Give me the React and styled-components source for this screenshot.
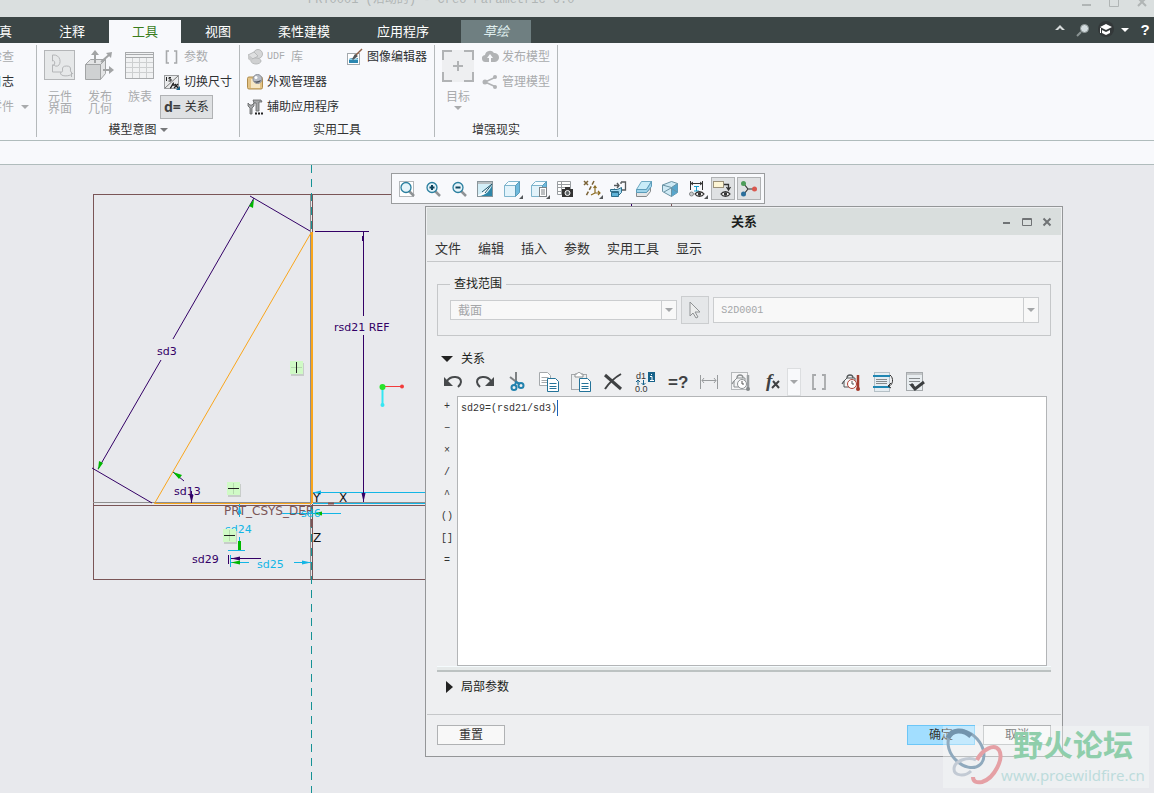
import React, { useState } from 'react';
import styled, { createGlobalStyle, css } from 'styled-components';

const TITLE = 'PRT0001 (活动的) - Creo Parametric 6.0';

const OPERATORS = ['+', '−', '×', '/', '^', '()', '[]', '='];

const MENUS = ['文件', '编辑', '插入', '参数', '实用工具', '显示'];

const Svg = ({ size = 16, box = 16, children }) => (
    <svg width={size} height={size} viewBox={`0 0 ${box} ${box}`} fill="none" aria-hidden="true">
        {children}
    </svg>
);

/* ---------- ribbon icons ---------- */

const PuzzleIcon = () => (
    <Svg size={32} box={32}>
        <rect x="0.5" y="0.5" width="30" height="29" fill="#e6e8e9" stroke="#b4b6b8" />
        <path d="M8.5 5v6c3-2 3 6 0 4v7h9c3 0-2-6 5-6s2 6 5 6v5M8.5 5c9-1 9 10 5 11-3 1-3-2-5-1M17 22c-3 5 10 5 12 1" stroke="#b4b6b8" />
    </Svg>
);

const PublishIcon = () => (
    <Svg size={32} box={32}>
        <path d="M1.5 14.500h15v15h-15z" fill="#cfd1d2" stroke="#a2a4a5" />
        <path d="M1.500 14.500l5-5h15l-5 5zM16.500 14.500l5-5v14l-5 6z" fill="#e3e4e5" stroke="#a2a4a5" />
        <path d="M11 13V4M17 12l8-7M19 20h8" stroke="#a2a4a5" strokeWidth="2" />
        <path d="M11 0l4 5H7zM28 2l-1 6-5-5zM30 20l-5 4v-8z" fill="#a2a4a5" />
    </Svg>
);

const TableIcon = () => (
    <Svg size={32} box={32}>
        <rect x="1.5" y="2.5" width="28" height="26" fill="#f1f2f3" stroke="#a9abad" />
        <path d="M1 4.5h29M1 7.500h29" stroke="#a9abad" />
        <path d="M2 12.500h27M2 17.500h27M2 22.500h27M8.500 8v20M15.500 8v20M22.500 8v20" stroke="#cdcfd0" />
    </Svg>
);

const TargetIcon = () => (
    <Svg size={32} box={32}>
        <rect width="32" height="32" fill="#eeeff1" />
        <path d="M1 10V1h9M22 1h9v9M31 22v9h-9M10 31H1v-9" stroke="#b1b3b5" strokeWidth="2" />
        <path d="M16 11v10M11 16h10" stroke="#b1b3b5" strokeWidth="2" />
    </Svg>
);

const BracketIcon = () => (
    <Svg>
        <path d="M5 2H2.500v12H5M10 2h2.500v12H10" stroke="#a7a9ab" strokeWidth="1.600" />
    </Svg>
);

const SwitchDimIcon = () => (
    <Svg>
        <rect x="0.500" y="1.500" width="14" height="13" fill="#e9eaeb" stroke="#9b9d9f" />
        <path d="M1 14L14 2" stroke="#777" />
        <path d="M2.500 3v4M7 3.500H5v1.500h2v2H4.500" stroke="#222" />
        <path d="M6 14c2 0 2-5 4-5M8 11h3M10 14l4-4M11 10l3 4" stroke="#222" strokeWidth="1.300" />
        <path d="M16 12v4h-4z" fill="#17628a" />
    </Svg>
);

const ShapesIcon = () => (
    <Svg>
        <circle cx="11" cy="5" r="4.500" fill="#d5d6d7" stroke="#b8babb" />
        <path d="M1 6l6-3 4 4-5 3z" fill="#dfe0e1" stroke="#b8babb" />
        <ellipse cx="9" cy="12" rx="5" ry="3" fill="#cfd0d1" stroke="#b8babb" />
        <path d="M1 6v4l4 3V9z" fill="#c9cacb" />
    </Svg>
);

const AppearanceIcon = () => (
    <Svg>
        <rect x="0.500" y="3" width="15" height="12" rx="1.500" fill="#e3c386" stroke="#b08d4c" />
        <path d="M4 5h9v9H4z" fill="#f6e7c4" />
        <circle cx="10.500" cy="5" r="4.500" fill="#b6bbc4" stroke="#8c9099" />
        <path d="M7 7c2 3 6 2 7-1-2 1-5 2-7 1z" fill="#4b4f57" />
        <circle cx="9" cy="3.500" r="1.500" fill="#fff" />
    </Svg>
);

const WrenchIcon = () => (
    <Svg>
        <path d="M1 4v3l2 2v6h2V9l2-2V4L5 6H3z" fill="#a5a7a9" stroke="#606263" strokeWidth="0.800" />
        <path d="M6 1h8l1 2h-3v9H9V4H7z" fill="#a5a7a9" stroke="#606263" strokeWidth="0.800" />
        <path d="M8 14.500h2M11 14.500h2M14 14.500h2" stroke="#222" strokeWidth="2" />
    </Svg>
);

const ImageEditIcon = () => (
    <Svg>
        <rect x="0.500" y="4.500" width="12" height="11" fill="#fff" stroke="#a3a9ad" />
        <path d="M2 10c3-2 6 1 9-1v5H2z" fill="#2b86b0" />
        <path d="M2 10h9v1H2z" fill="#8fd0ea" />
        <path d="M15 0L8 7" stroke="#8d5f45" strokeWidth="1.500" />
        <path d="M8 5l3 2-5 4-1-1z" fill="#55585a" />
    </Svg>
);

const CloudIcon = () => (
    <Svg>
        <path d="M4 13a3.500 3.500 0 0 1-1-7 5 5 0 0 1 9-2 4.500 4.500 0 0 1 1 9z" fill="#b1b3b5" />
        <path d="M8 5l3 4H9v4H7V9H5z" fill="#f8f9fc" />
    </Svg>
);

const ShareIcon = () => (
    <Svg>
        <path d="M14 3L3 8l11 5" stroke="#b1b3b5" strokeWidth="1.500" />
        <circle cx="3" cy="8" r="2.500" fill="#b1b3b5" />
        <circle cx="13" cy="3" r="2" fill="#b1b3b5" />
        <circle cx="13" cy="13" r="2" fill="#b1b3b5" />
    </Svg>
);

const RelationGlyph = styled.span`
    font: bold 14px/16px 'Noto Sans', sans-serif;
    color: #3d3f41;
`;

/* ---------- view toolbar icons ---------- */

const Lens = ({ children }) => (
    <>
        <path d="M10 10l5 5" stroke="#8f9396" strokeWidth="2.500" />
        <circle cx="7" cy="6.500" r="5" fill="#e6f4fa" stroke="#2a7f9f" strokeWidth="1.300" />
        {children}
    </>
);

const Cube = () => (
    <>
        <path d="M0.500 4.500h11v11h-11z" fill="#e2f3fb" stroke="#7fb5cd" />
        <path d="M0.500 4.500l4-4h11l-4 4z" fill="#f5fcff" stroke="#7fb5cd" />
        <path d="M11.500 4.500l4-4v11l-4 4z" fill="#6fbadd" stroke="#5b9cba" />
    </>
);

const Eye = () => (
    <>
        <path d="M6 13c2-3 7-3 9 0-2 3-7 3-9 0z" fill="#fff" stroke="#333" strokeWidth="1.300" />
        <circle cx="10.500" cy="13" r="1.700" fill="#333" />
    </>
);

const VIEW_TOOLS = [
    { label: '重新调整', art: <><rect x="0.500" y="0.500" width="14" height="15" fill="#fff" stroke="#b3b7ba" /><Lens /></> },
    { label: '放大', art: <Lens><path d="M4.500 6.500h5M7 4v5" stroke="#10455e" strokeWidth="2" /></Lens> },
    { label: '缩小', art: <Lens><path d="M4.500 6.500h5" stroke="#10455e" strokeWidth="2" /></Lens> },
    {
        label: '重画',
        art: <>
            <rect x="0.500" y="0.500" width="15" height="15" fill="#d3eef7" stroke="#89959b" />
            <path d="M1 2h14" stroke="#b9bfc2" strokeWidth="2" />
            <path d="M2 15C9 14 13 10 15 4v11z" fill="#2e86a8" />
            <path d="M1 14c4-1 5-3 5-3l9-7-6 8c-3 2-5 3-8 3z" fill="#fff" />
            <path d="M5 11l10-8-7 9" stroke="#20556b" />
        </>,
    },
    { label: '显示样式', drop: true, art: <Cube /> },
    { label: '已保存方向', drop: true, art: <><Cube /><rect x="8.500" y="6.500" width="7" height="9" fill="#fff" stroke="#7d8286" /><path d="M10 9h4M10 11h4M10 13h4" stroke="#7d8286" /></> },
    {
        label: '视图管理器',
        art: <>
            <path d="M1 1h13v13H1z" fill="#fff" />
            <path d="M0.500 0.500h13v13h-13zM0.500 3.500h13M0.500 6.500h13M0.500 10.500h13M4.500 0v14" stroke="#999da0" />
            <rect x="5" y="8" width="11" height="8" fill="#333" />
            <rect x="8" y="6" width="5" height="3" fill="#333" />
            <circle cx="10.500" cy="12" r="2.500" fill="#5f6466" stroke="#fff" />
        </>,
    },
    {
        label: '基准显示',
        drop: true,
        art: <>
            <path d="M0 0l4 4M4 0L0 4" stroke="#7a6236" strokeWidth="1.500" />
            <path d="M10 0L2 15" stroke="#7a6236" strokeWidth="1.500" strokeDasharray="4 2" />
            <path d="M11 5v7h5M11 12l-4 2M9.500 7L11 5l1.500 2M14 10l2 2-2 2" stroke="#8b6b20" strokeWidth="1.200" />
        </>,
    },
    {
        label: '旋转中心',
        art: <>
            <path d="M1.500 11.500h7v4h-7zM1.500 11.500l3-4" fill="#5fb3d8" stroke="#2d6f8c" />
            <path d="M0.500 8.500h7l4-2v5l-3 3v-4h-8z" fill="#a6daf0" stroke="#2d6f8c" />
            <path d="M4 4.500h5M7 2l2 2.500L7 7M11 1h4.500v8H12M11 1v2" stroke="#55595b" strokeWidth="1.300" />
        </>,
    },
    {
        label: '截面',
        art: <>
            <path d="M0.500 11.500h10l4-5v4l-4 5h-10z" fill="#e3e5e6" stroke="#85898b" />
            <path d="M0.500 8.500l5-8h10l-5 8z" fill="#c8ecf8" stroke="#6ea9c2" />
            <path d="M10.500 8.500l5-8v5l-5 6h-10v-3z" fill="#9fd4ea" stroke="#5b9cba" />
        </>,
    },
    {
        label: '透视图',
        art: <>
            <path d="M0.500 4l9-3.500 6 2v9l-6 4-9-5z" fill="#cfeaf5" stroke="#6a93a4" />
            <path d="M9.500 6.500l6-4v9l-6 4z" fill="#58a6cc" />
            <path d="M0.500 4l9 2.500 6-4M9.500 6.500v9M2 11l7-4 6 4" stroke="#6a93a4" />
        </>,
    },
    {
        label: '注释显示',
        drop: true,
        art: <>
            <path d="M1.500 0v9M13.500 0v9M2 2.500h11M4 1L2 2.500 4 4M11 1l2 1.500L11 4" stroke="#333" />
            <path d="M5 5.500h5M7.500 5v5M5 10h5" stroke="#179ccb" />
            <circle cx="2.500" cy="13" r="2" fill="#c9cccd" stroke="#85898b" />
            <Eye />
        </>,
    },
    {
        label: '注释过滤',
        on: true,
        art: <>
            <rect x="-1.500" y="0.500" width="10" height="6" fill="#fdf5d4" stroke="#9b917a" />
            <path d="M9 3.500h4.500v5M11.500 6l2 3 2-3" stroke="#333" strokeWidth="1.300" />
            <Eye />
        </>,
    },
    {
        label: '坐标显示',
        on: true,
        art: <>
            <path d="M3 3l4 5h6M7 8l-4 5" stroke="#333" strokeWidth="1.200" />
            <circle cx="2.500" cy="2.500" r="2.500" fill="#4d9d5a" />
            <circle cx="2.500" cy="13" r="2.500" fill="#2b6f9c" />
            <circle cx="13.500" cy="8" r="2.500" fill="#d9584f" />
        </>,
    },
];

/* ---------- dialog toolbar icons ---------- */

const Page = ({ x, y, color = '#a5a9ac' }) => (
    <>
        <path d={`M${x} ${y}h8l3 3v10h-11z`} fill="#fff" stroke={color} />
        <path d={`M${x + 2} ${y + 5}h7M${x + 2} ${y + 8}h7M${x + 2} ${y + 10}h7`} stroke={color} />
    </>
);

const Kettle = ({ hot }) => (
    <>
        <path d="M3 15V9l3-3h8v9z" fill="#f3f4f5" stroke={hot ? '#55595b' : '#8d9193'} />
        <path d="M6 6c0-4 6-4 6 0M3 9l-2 3" stroke={hot ? '#55595b' : '#8d9193'} strokeWidth="1.300" />
        <circle cx="11" cy="12" r="4.500" fill="#fff" stroke={hot ? '#b34437' : '#8d9193'} />
        <path d="M11 9v3h2" stroke="#555" />
        <path d="M17 3v13" stroke={hot ? '#a33a2c' : '#9b9fa1'} strokeWidth="2.500" />
        <circle cx="17" cy="17" r="2" fill={hot ? '#a33a2c' : '#85898b'} />
    </>
);

const EDIT_TOOLS = [
    { label: '撤消', art: <><path d="M4 9c4-6 14-5 14 1 0 2-1 3-3 5" stroke="#474a4c" strokeWidth="2" /><path d="M1 5v9h9z" fill="#474a4c" /></> },
    { label: '重做', art: <><path d="M16 9C12 3 2 4 2 10c0 2 1 3 3 5" stroke="#474a4c" strokeWidth="2" /><path d="M19 5v9h-9z" fill="#474a4c" /></> },
    {
        label: '剪切',
        art: <>
            <path d="M9 0v11M3 5l9 7" stroke="#7d8183" strokeWidth="2" />
            <circle cx="7" cy="15.500" r="2.500" stroke="#2282ae" strokeWidth="2" />
            <circle cx="14" cy="13.500" r="2.500" stroke="#2282ae" strokeWidth="2" />
            <path d="M8 13l1-3 4 2" stroke="#2282ae" strokeWidth="2" />
        </>,
    },
    { label: '复制', art: <><Page x={0.5} y={0.5} /><Page x={8.5} y={6.5} color="#247399" /></> },
    { label: '粘贴', art: <><rect x="0.500" y="2.500" width="15" height="15" fill="#eceeef" stroke="#a5a9ac" /><path d="M4 5V2h2c0-2 4-2 4 0h2v3z" fill="#fff" stroke="#8d9193" /><Page x={8.5} y={6.5} color="#247399" /></> },
    { label: '删除', art: <><path d="M2 3l16 14" stroke="#3f4143" strokeWidth="3" /><path d="M18 2C11 6 6 11 2 17" stroke="#3f4143" strokeWidth="2" /></> },
    {
        label: '切换尺寸',
        art: <>
            <text x="1" y="7" fontSize="9" fill="#333" fontFamily="Liberation Sans">d1</text>
            <text x="0" y="20" fontSize="9" fill="#333" fontFamily="Liberation Sans">0.0</text>
            <path d="M3 13V8M1 10l2-2 2 2M8.500 8v5M6.500 11l2 2 2-2" stroke="#17628a" />
            <rect x="13" y="0" width="7" height="10" fill="#17628a" />
            <path d="M15 4.500h2v4M15 8.500h4M16 2.500h1" stroke="#fff" />
        </>,
    },
    { label: '求值', art: <text x="1" y="16" fontSize="17" fontWeight="bold" fill="#3f4143" fontFamily="Liberation Sans">=?</text> },
    { label: '显示尺寸', art: <path d="M1.500 3v14M18.500 3v14M3 8.500h14M5 6L3 8.500 5 11M15 6l2 2.500-2 2.500" stroke="#999c9e" /> },
    { label: '单位', art: <><rect x="0.500" y="0.500" width="16" height="17" fill="#f5f5f6" stroke="#b5b8ba" /><Kettle /></> },
    {
        label: '插入函数',
        fx: true,
        art: <>
            <text x="4" y="15" fontSize="19" fontWeight="bold" fontStyle="italic" fill="#3f4143" fontFamily="Liberation Serif">f</text>
            <path d="M11 9l6 7M17 9l-7 7" stroke="#3f4143" strokeWidth="2" />
        </>,
    },
    { label: '插入参数', art: <path d="M7 3H4v14h3M13 3h3v14h-3" stroke="#a7a9ab" strokeWidth="1.800" /> },
    { label: '单位敏感', art: <Kettle hot /> },
    {
        label: '排序',
        art: <>
            <rect x="1.500" y="0.500" width="15" height="19" fill="#e5edf2" stroke="#b5c0c6" />
            <path d="M0 4h17M0 15h17" stroke="#1f86b2" strokeWidth="2" />
            <path d="M3 7.500h11M3 9.500h11M3 11.500h11" stroke="#85898b" />
            <path d="M17 3c4 3 3 10-1 11M18 11l-3 3 3 2" stroke="#333" />
        </>,
    },
    {
        label: '验证',
        art: <>
            <rect x="1.500" y="0.500" width="16" height="18" fill="#e8edf0" stroke="#a5a9ac" />
            <path d="M2 2h15" stroke="#c5c8ca" strokeWidth="2" />
            <path d="M4 6.500h11M4 9.500h11M4 12.500h5" stroke="#85898b" />
            <path d="M6 12l4 5 9-7" stroke="#3b3e40" strokeWidth="3" />
        </>,
    },
];

/* ---------- small pieces ---------- */

const Triangle = styled.span`
    display: inline-block;
    flex: none;
    border: ${({ $size = 4 }) => $size}px solid transparent;
    ${({ $dir = 'down', $size = 4, $color = '#77797b' }) =>
        $dir === 'down'
            ? css`
                border-bottom: 0;
                border-top-color: ${$color};
            `
            : css`
                border-right: 0;
                border-left: ${$size + 1}px solid ${$color};
            `}
`;

const RibbonButton = ({ icon, label, disabled, active, mono, inset }) => (
    <SmallButton type="button" disabled={disabled} $active={active} $inset={inset}>
        {icon}
        {mono && <Mono>{mono}</Mono>}
        <span>{label}</span>
    </SmallButton>
);

const Combo = ({ label, value, tall, mono }) => (
    <ComboBox $grow={tall ? 326 : 227} $tall={tall}>
        <ComboSelect aria-label={label} disabled $mono={mono}>
            <option>{value}</option>
        </ComboSelect>
        <ComboArrow><Triangle $color="#a4a6a8" /></ComboArrow>
    </ComboBox>
);

/* ---------- sketch drawn on the canvas ---------- */

const Constraint = ({ x, y, vertical }) => (
    <g>
        <rect x={x + 1} y={y + 2} width="13" height="13" fill="#c8cdca" />
        <rect x={x} y={y} width="13" height="13" fill="#d0fac6" />
        <path d={`M${x + 1} ${y + 6.5}h11M${x + 6.5} ${y + 1}v11`} stroke="#b5d8ae" />
        <path d={vertical ? `M${x + 6.5} ${y + 1}v11` : `M${x + 1} ${y + 6.5}h11`} stroke="#222" />
    </g>
);

const Sketch = () => (
    <SketchSvg aria-label="草绘">
        <g transform="translate(0 -165)" fill="none">
            <rect x="93.500" y="194.500" width="578" height="385" stroke="#7a5557" />
            <path d="M93 505.500h578" stroke="#7a5557" />
            <path d="M93 502.500h578M310.500 195v384" stroke="#8e8e8e" />
            <path d="M312.500 195v37M312.500 504v75" stroke="#7a5557" />
            <path d="M311.500 165v67M311.500 506v287" stroke="#159295" strokeDasharray="8 6" />
            <path d="M312 503.500H154.500L311.500 232" stroke="#f9a51b" />
            <path d="M312 232v271" stroke="#f9a51b" strokeWidth="2" />
            <path d="M313 503.500h400M313 492.500h400" stroke="#12b5e5" />
            <path d="M313 492.500l8-2v4z" fill="#12b5e5" />

            <g stroke="#330066">
                <path d="M250 196l60 35M92 468l60 35M254 198L173 339M161 360L98 469" />
                <path d="M315 231.500h54M363.500 232v84M363.500 335v167M631.500 203v4" />
                <path d="M173 472l11 9M191.500 491v12M228.500 555v9M231 558.500h30" />
            </g>
            <path d="M362 236h2v5h-2zM363.500 502l-2-9h4zM191.500 503l-2-8h4zM231 558.500l9-2v4z" fill="#330066" />
            <path d="M254 199l-1 9-4-2zM98 470l1-9 4 2zM173 472l9 3-3 4z" fill="#00b800" />

            <g stroke="#12b5e5">
                <path d="M239.500 504v13M239.500 537v14M228 550.500h17M230.500 555v12M231 562.500h18M294 562.500h17M281 513.500h60" />
            </g>
            <path d="M239.500 505l2 9h-4zM311 562.500l-9-2v4z" fill="#12b5e5" />
            <path d="M238 541h3v9h-3zM231 562.500l9-2v4zM313 513.500l9-2v4z" fill="#00b800" />
            <path d="M311.500 519v8M328 503.500h6" stroke="#7a5557" strokeWidth="2" />

            <DimText x="157" y="355">sd3</DimText>
            <DimText x="334" y="331">rsd21 REF</DimText>
            <DimText x="174" y="495">sd13</DimText>
            <DimText x="192" y="563">sd29</DimText>
            <DimText x="224" y="515" $color="#7a5557" $size={12}>PRT_CSYS_DEF</DimText>
            <DimText x="225" y="533" $color="#12b5e5">sd24</DimText>
            <DimText x="257" y="568" $color="#12b5e5">sd25</DimText>
            <DimText x="301" y="517" $color="#12b5e5">sd6</DimText>
            <DimText x="313" y="502" $color="#111" $size={12}>Y</DimText>
            <DimText x="339" y="502" $color="#111" $size={12}>X</DimText>
            <DimText x="313" y="542" $color="#111" $size={12}>Z</DimText>

            <Constraint x={290} y={361} vertical />
            <Constraint x={227} y={482} />
            <Constraint x={223} y={529} />

            <path d="M382.500 387v17" stroke="#35e6f2" strokeWidth="2" />
            <path d="M382 386.500h20" stroke="#f23b3b" />
            <circle cx="402" cy="386.500" r="2" fill="#f23b3b" />
            <circle cx="382.500" cy="405" r="2" fill="#35e6f2" />
            <circle cx="382.500" cy="387" r="3" fill="#27e32b" />
        </g>
    </SketchSvg>
);

const RelationsDialog = () => {
    const [relations, setRelations] = useState('sd29=(rsd21/sd3)');

    return (
        <Dialog role="dialog" aria-label="关系">
            <DialogTitle>
                <h1>关系</h1>
                <WindowButtons>
                    <IconButton type="button" aria-label="最小化">
                        <Svg size={12} box={12}><path d="M2 7h7" stroke="#707375" strokeWidth="2" /></Svg>
                    </IconButton>
                    <IconButton type="button" aria-label="最大化">
                        <Svg size={12} box={12}><path d="M1.500 2.500h9v7h-9zM1 3.500h10" stroke="#707375" /></Svg>
                    </IconButton>
                    <IconButton type="button" aria-label="关闭">
                        <Svg size={12} box={12}><path d="M2.500 2.500l7 7M9.500 2.500l-7 7" stroke="#707375" strokeWidth="2" /></Svg>
                    </IconButton>
                </WindowButtons>
            </DialogTitle>

            <MenuBar>
                {MENUS.map((menu) => <MenuButton key={menu} type="button">{menu}</MenuButton>)}
            </MenuBar>

            <DialogBody>
                <Scope>
                    <legend>查找范围</legend>
                    <ScopeRow>
                        <Combo label="对象类型" value="截面" />
                        <PickButton type="button" aria-label="选择" disabled>
                            <Svg size={20} box={20}><path d="M5 2v14l3-3 3 5 2-1-3-5h5z" fill="#eceded" stroke="#8f9294" /></Svg>
                        </PickButton>
                        <Combo label="对象名称" value="S2D0001" tall mono />
                    </ScopeRow>
                </Scope>

                <SectionToggle type="button">
                    <Triangle $size={6} $color="#222" />
                    关系
                </SectionToggle>

                <EditBar>
                    {EDIT_TOOLS.map(({ label, art, fx }) => (
                        <React.Fragment key={label}>
                            <EditButton type="button" aria-label={label} $narrow={fx}>
                                <Svg size={20} box={20}>{art}</Svg>
                            </EditButton>
                            {fx && <FxDrop type="button" aria-label="函数列表"><Triangle $color="#a4a6a8" /></FxDrop>}
                        </React.Fragment>
                    ))}
                </EditBar>

                <Editor>
                    <Operators>
                        {OPERATORS.map((op) => <button key={op} type="button">{op}</button>)}
                    </Operators>
                    <TextHolder>
                        <RelationText
                            aria-label="关系文本"
                            spellCheck={false}
                            value={relations}
                            onChange={(e) => setRelations(e.target.value)}
                        />
                        <Caret style={{ left: 4 + relations.length * 6 }} />
                    </TextHolder>
                </Editor>

                <Splitter />

                <SectionToggle type="button" $closed>
                    <Triangle $size={6} $dir="right" $color="#222" />
                    局部参数
                </SectionToggle>
            </DialogBody>

            <DialogFooter>
                <DialogButton type="button">重置</DialogButton>
                <Spacer />
                <DialogButton type="button" $primary>确定</DialogButton>
                <DialogButton type="button">取消</DialogButton>
            </DialogFooter>
        </Dialog>
    );
};

const App = () => {
    return (
        <Window>
            <GlobalStyle />
            <TitleBar>
                <p>{TITLE}</p>
                <Svg size={12} box={12}><path d="M2 9h9" stroke="#b0b5b5" strokeWidth="2" /></Svg>
                <Svg size={12} box={12}><path d="M1.500 2.500h9v8h-9z" stroke="#b0b5b5" /></Svg>
                <Svg size={12} box={12}><path d="M2 2l8 8M10 2l-8 8" stroke="#b0b5b5" strokeWidth="2" /></Svg>
            </TitleBar>

            <TabBar>
                <Tabs>
                    <Tab type="button">仿真</Tab>
                    <Tab type="button">注释</Tab>
                    <Tab type="button" $active>工具</Tab>
                    <Tab type="button">视图</Tab>
                    <Tab type="button">柔性建模</Tab>
                    <Tab type="button">应用程序</Tab>
                    <Tab type="button" $sketch>草绘</Tab>
                </Tabs>
                <TabTools>
                    <IconButton type="button" aria-label="最小化功能区">
                        <Svg><path d="M3 8l5-5 5 5h-3L8 6 6 8z" fill="#d7dbdb" /></Svg>
                    </IconButton>
                    <IconButton type="button" aria-label="搜索">
                        <Svg><path d="M6 10l-4 4" stroke="#8a9393" strokeWidth="2" /><circle cx="9.500" cy="6.500" r="4" fill="#d3dcdf" stroke="#8a9393" /></Svg>
                    </IconButton>
                    <IconButton type="button" aria-label="学习">
                        <Svg><circle cx="8" cy="7" r="8" fill="#333839" /><path d="M8 2l6 3-6 3-6-3zM4 8l4 2 4-2v3l-4 2-4-2zM2 6v5h1V6z" fill="#fff" /></Svg>
                    </IconButton>
                    <IconButton type="button" aria-label="更多"><Triangle $color="#fff" /></IconButton>
                    <HelpButton type="button">?</HelpButton>
                </TabTools>
            </TabBar>

            <Ribbon>
                <Group $edge>
                    <Column $end>
                        <RibbonButton label="检查" disabled inset />
                        <RibbonButton label="日志" inset />
                        <SmallButton type="button" disabled $wide>零件<Triangle $color="#a9abad" /></SmallButton>
                    </Column>
                </Group>
                <Group>
                    <GroupBody>
                        <BigButton type="button" disabled><PuzzleIcon />元件<br />界面</BigButton>
                        <BigButton type="button" disabled><PublishIcon />发布<br />几何</BigButton>
                        <BigButton type="button" disabled><TableIcon />族表</BigButton>
                        <Column>
                            <RibbonButton icon={<BracketIcon />} label="参数" disabled />
                            <RibbonButton icon={<SwitchDimIcon />} label="切换尺寸" />
                            <RibbonButton icon={<RelationGlyph>d=</RelationGlyph>} label="关系" active />
                        </Column>
                    </GroupBody>
                    <GroupName>模型意图 <Triangle /></GroupName>
                </Group>
                <Group>
                    <GroupBody>
                        <Column>
                            <RibbonButton icon={<ShapesIcon />} mono="UDF" label="库" disabled />
                            <RibbonButton icon={<AppearanceIcon />} label="外观管理器" />
                            <RibbonButton icon={<WrenchIcon />} label="辅助应用程序" />
                        </Column>
                        <Column>
                            <RibbonButton icon={<ImageEditIcon />} label="图像编辑器" />
                        </Column>
                    </GroupBody>
                    <GroupName>实用工具</GroupName>
                </Group>
                <Group>
                    <GroupBody>
                        <BigButton type="button" disabled><TargetIcon />目标<Triangle $color="#a9abad" /></BigButton>
                        <Column>
                            <RibbonButton icon={<CloudIcon />} label="发布模型" disabled />
                            <RibbonButton icon={<ShareIcon />} label="管理模型" disabled />
                        </Column>
                    </GroupBody>
                    <GroupName>增强现实</GroupName>
                </Group>
            </Ribbon>
            <Strip />

            <Canvas>
                <Sketch />
                <ViewBar>
                    {VIEW_TOOLS.map(({ label, art, drop, on }) => (
                        <ViewButton key={label} type="button" aria-label={label} $drop={drop} $on={on}>
                            <Svg>{art}</Svg>
                        </ViewButton>
                    ))}
                </ViewBar>
                <RelationsDialog />
                <Watermark>
                    <svg width="58" height="60" viewBox="0 0 58 60" fill="none" aria-hidden="true">
                        <ellipse cx="23" cy="23" rx="21" ry="15" transform="rotate(48 23 23)" stroke="#8fa9bd" strokeWidth="3" />
                        <path d="M5 12C9 3 20 3 28 10" stroke="#7394ad" strokeWidth="5" />
                        <path d="M33 34c-8-4-22 1-22 9 0 7 11 8 17 2" stroke="#c2cad4" strokeWidth="3" />
                        <path d="M34 34c5-10 17-17 22-10 5 8-4 28-17 32-5 1-9 0-9-5" stroke="#e5a0a5" strokeWidth="4" />
                    </svg>
                    <div>
                        <strong>野火论坛</strong>
                        <span>www.proewildfire.cn</span>
                    </div>
                </Watermark>
            </Canvas>
        </Window>
    );
};

// Styled Components
const GlobalStyle = createGlobalStyle`
    * {
        box-sizing: border-box;
    }
    body {
        margin: 0;
        font: 12px/16px 'Liberation Sans', 'Noto Sans CJK SC', sans-serif;
        color: #333;
    }
    button, select, textarea {
        font: inherit;
        color: inherit;
        margin: 0;
        padding: 0;
        border: 0;
        background: none;
    }
    svg {
        display: block;
        flex: none;
        overflow: visible;
    }
`;

const Window = styled.div`
    display: flex;
    flex-direction: column;
    min-height: 100vh;
    overflow: hidden;
    background: #f8f9fc;
`;

const Mono = styled.span`
    margin-right: 2px;
    font-family: 'Liberation Mono', monospace;
    font-size: 10px;
`;

const Spacer = styled.span`
    flex: 1;
`;

const TitleBar = styled.header`
    display: flex;
    gap: 16px;
    height: 17px;
    padding: 0 6px 0 308px;
    overflow: hidden;
    background: #dadfdf;
    p {
        flex: 1;
        margin: -8px 0 0;
        font: 12px/16px 'Liberation Mono', 'Noto Sans CJK SC', monospace;
        color: #b0b5b5;
        white-space: nowrap;
    }
    svg {
        margin-top: -4px;
    }
`;

const TabBar = styled.nav`
    display: flex;
    justify-content: space-between;
    height: 26px;
    padding-top: 3px;
    background: #3c4646;
`;

const Tabs = styled.div`
    display: flex;
    gap: 1px;
    margin-left: -37px;
`;

const Tab = styled.button`
    padding: 0 23px;
    font-size: 13px;
    color: #fff;
    white-space: nowrap;
    ${({ $active }) => $active && css`
        background: #f8f9fc;
        color: #3a7d1c;
    `}
    ${({ $sketch }) => $sketch && css`
        margin-left: 8px;
        padding: 0 22px;
        background: #6f7f81;
        color: #dfeeee;
        font-style: italic;
    `}
`;

const TabTools = styled.div`
    display: flex;
    align-items: center;
    gap: 7px;
    padding: 0 4px 4px 0;
`;

const IconButton = styled.button`
    display: grid;
    place-items: center;
`;

const HelpButton = styled.button`
    width: 10px;
    margin-left: 4px;
    font-size: 15px;
    font-weight: bold;
    color: #fff;
`;

const Ribbon = styled.section`
    display: flex;
    height: 98px;
    padding: 2px 0 3px;
    border-bottom: 1px solid #b0bcbc;
`;

const Group = styled.div`
    display: flex;
    flex-direction: column;
    justify-content: space-between;
    flex: none;
    padding: 0 7px;
    border-right: 1px solid #b5b9bb;
    ${({ $edge }) => $edge && css`
        width: 37px;
        align-items: flex-end;
    `}
`;

const GroupBody = styled.div`
    display: flex;
    gap: 8px;
`;

const GroupName = styled.div`
    display: flex;
    align-items: center;
    justify-content: center;
    gap: 3px;
    line-height: 14px;
`;

const Column = styled.div`
    display: flex;
    flex-direction: column;
    align-items: ${({ $end }) => ($end ? 'flex-end' : 'flex-start')};
    gap: 1px;
`;

const SmallButton = styled.button`
    display: flex;
    align-items: center;
    gap: ${({ $wide }) => ($wide ? 7 : 4)}px;
    height: 24px;
    padding-right: ${({ $inset }) => ($inset ? 15 : 0)}px;
    white-space: nowrap;
    color: ${({ disabled }) => (disabled ? '#a9abad' : '#2e3032')};
    ${({ $active }) => $active && css`
        margin-left: -4px;
        padding: 0 3px;
        background: #dfe1e3;
        border: 1px solid #b0b2b4;
    `}
`;

const BigButton = styled.button`
    display: flex;
    flex-direction: column;
    align-items: center;
    justify-content: flex-start;
    width: 32px;
    padding-top: 5px;
    line-height: 12px;
    color: #a9abad;
    svg {
        margin-bottom: 9px;
    }
    ${Triangle} {
        margin-top: 3px;
    }
`;

const Strip = styled.div`
    height: 24px;
    border-bottom: 1px solid #b0bcbc;
`;

const Canvas = styled.main`
    position: relative;
    flex: 1;
    min-height: 628px;
    overflow: hidden;
    background: #e8e9ed;
`;

const SketchSvg = styled.svg`
    position: absolute;
    inset: 0;
    width: 100%;
    height: 100%;
`;

const DimText = styled.text`
    font-family: 'DejaVu Sans', sans-serif;
    font-size: ${({ $size = 11 }) => $size}px;
    fill: ${({ $color = '#330066' }) => $color};
`;

const ViewBar = styled.div`
    position: absolute;
    top: 8px;
    left: 391px;
    display: flex;
    gap: 2px;
    padding: 3px;
    background: #f8f9fc;
    border: 1px solid #9a9c9e;
`;

const ViewButton = styled.button`
    position: relative;
    display: grid;
    place-items: center;
    width: ${({ $drop }) => ($drop ? 25 : 24)}px;
    height: 23px;
    ${({ $on }) => $on && css`
        background: #dfe1e3;
        border: 1px solid #b0b2b4;
    `}
    ${({ $drop }) => $drop && css`
        &::after {
            content: '';
            position: absolute;
            right: 1px;
            bottom: 1px;
            border: 2px solid #55585a;
            border-top-color: transparent;
            border-left-color: transparent;
        }
    `}
`;

const Dialog = styled.section`
    position: absolute;
    top: 41px;
    left: 425px;
    width: 638px;
    padding: 1px;
    background: #eeeff1;
    border: 1px solid #949698;
`;

const DialogTitle = styled.header`
    display: grid;
    grid-template-columns: 1fr auto 1fr;
    align-items: center;
    height: 27px;
    background: #d9dedd;
    h1 {
        grid-column: 2;
        margin: 0;
        font-size: 13px;
        line-height: 16px;
        color: #1c1e20;
    }
`;

const WindowButtons = styled.div`
    display: flex;
    justify-content: flex-end;
    gap: 8px;
    padding-right: 8px;
`;

const MenuBar = styled.nav`
    display: flex;
    gap: 17px;
    height: 27px;
    padding: 2px 8px 0;
    border-bottom: 1px solid #c5c7c9;
`;

const MenuButton = styled.button`
    font-size: 13px;
`;

const DialogBody = styled.div`
    padding: 14px 10px 0;
`;

const Scope = styled.fieldset`
    margin: 0;
    padding: 4px 11px 11px 12px;
    border: 1px solid #c5c7c9;
    legend {
        padding: 0 4px;
        line-height: 16px;
        color: #1c1e20;
    }
`;

const ScopeRow = styled.div`
    display: flex;
    align-items: center;
    gap: 4px;
`;

const ComboBox = styled.div`
    position: relative;
    flex: ${({ $grow }) => $grow} 1 0;
    height: ${({ $tall }) => ($tall ? 26 : 20)}px;
    border: 1px solid #cbcdcf;
    background: #f8f8f8;
`;

const ComboSelect = styled.select`
    appearance: none;
    width: 100%;
    height: 100%;
    padding: 1px 22px 0 7px;
    color: #a4a6a8;
    opacity: 1;
    ${({ $mono }) => $mono && css`
        font-family: 'Liberation Mono', monospace;
        font-size: 10px;
    `}
`;

const ComboArrow = styled.span`
    position: absolute;
    top: 0;
    right: 0;
    bottom: 0;
    display: grid;
    place-items: center;
    width: 15px;
    border-left: 1px solid #cbcdcf;
    pointer-events: none;
`;

const PickButton = styled.button`
    display: grid;
    place-items: center;
    width: 28px;
    height: 28px;
    background: #e5e7e9;
    border: 1px solid #cbcdcf;
`;

const SectionToggle = styled.button`
    display: flex;
    align-items: center;
    gap: 8px;
    margin-top: ${({ $closed }) => ($closed ? 7 : 15)}px;
    padding-left: ${({ $closed }) => ($closed ? 9 : 4)}px;
    line-height: 16px;
    color: #1c1e20;
`;

const EditBar = styled.div`
    display: flex;
    align-items: flex-end;
    height: 29px;
`;

const EditButton = styled.button`
    display: grid;
    place-items: center;
    width: ${({ $narrow }) => ($narrow ? 30 : 32)}px;
    height: 28px;
`;

const FxDrop = styled.button`
    display: grid;
    place-items: center;
    width: 14px;
    height: 28px;
    margin-right: 2px;
    background: #f8f9fb;
    border: 1px solid #dcdee0;
`;

const Editor = styled.div`
    display: flex;
    padding-right: 4px;
`;

const Operators = styled.div`
    display: grid;
    grid-auto-rows: 22px;
    width: 20px;
    button {
        font: 10px/20px 'Liberation Mono', monospace;
    }
`;

const TextHolder = styled.div`
    position: relative;
    flex: 1;
`;

const RelationText = styled.textarea`
    display: block;
    width: 100%;
    height: 270px;
    padding: 4px 3px;
    font: 10px/16px 'Liberation Mono', monospace;
    background: #fff;
    border: 1px solid #b3b5b7;
    outline: 0;
    resize: none;
`;

const Caret = styled.span`
    position: absolute;
    top: 4px;
    width: 1px;
    height: 16px;
    background: #1a62b8;
`;

const Splitter = styled.hr`
    height: 6px;
    margin: 0;
    border: 0;
    border-top: 1px solid #f5fbfd;
    border-bottom: 2px solid #bcc2c2;
    background: #e6eaea;
`;

const DialogFooter = styled.footer`
    display: flex;
    gap: 8px;
    margin-top: 19px;
    padding: 10px;
    border-top: 1px solid #c5c7c9;
`;

const DialogButton = styled.button`
    width: 68px;
    height: 20px;
    line-height: 18px;
    background: ${({ $primary }) => ($primary ? '#a2deff' : '#f8f8f8')};
    border: 1px solid ${({ $primary }) => ($primary ? '#6cc6f7' : '#b0b2b4')};
`;

const Watermark = styled.div`
    position: absolute;
    right: 5px;
    bottom: 5px;
    display: flex;
    width: 206px;
    height: 62px;
    padding-right: 4px;
    background: rgba(248, 249, 251, 0.4);
    div {
        display: flex;
        flex-direction: column;
        align-items: center;
        flex: 1;
    }
    strong {
        font-size: 30px;
        line-height: 40px;
        color: #8fceab;
    }
    span {
        font: 15px/18px 'Noto Sans', sans-serif;
        color: #bddcdc;
    }
`;

export default App;
